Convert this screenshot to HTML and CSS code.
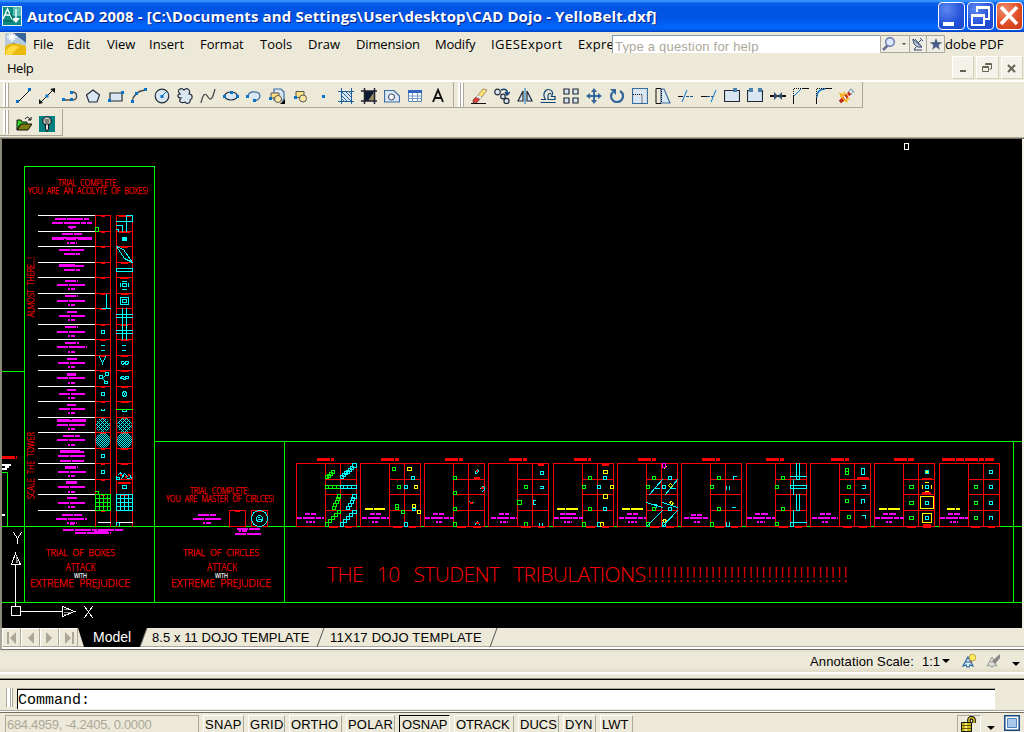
FILE: index.html
```html
<!DOCTYPE html>
<html lang="en">
<head>
<meta charset="utf-8">
<title>AutoCAD 2008</title>
<link rel="stylesheet" href="styles.css">
</head>
<body>
<div class="app">
<header class="titlebar">
  <svg class="app-icon" width="20" height="20" viewBox="0 0 20 20"><path fill="#0b8c84" d="M0 0h20v20H0z"/><path fill="#57bdb5" d="M11 1h8v9h-8z"/><path fill="none" stroke="#e8f4f2" d="M.5.5h19v19H.5z"/><path fill="none" stroke="#fff" stroke-width="1.4" d="M1 13 5.500 3 10 13M3 9h5M14 3v9"/><path fill="#fff" d="M9 12h9l-4 5z"/><path stroke="#053" d="M2 15h8M8 7l3 6"/></svg>
  <span class="title-text">AutoCAD 2008 - [C:\Documents and Settings\User\desktop\CAD Dojo - YelloBelt.dxf]</span>
  <div class="win-buttons">
    <span class="win-btn"><svg width="24" height="24"><path fill="#fff" d="M4 19h11v4H4z"/></svg></span>
    <span class="win-btn"><svg width="24" height="24"><path fill="none" stroke="#fff" stroke-width="2" d="M9 9V5h12v11h-4M4 12h12v10H4z"/><path fill="#fff" d="M8 3h14v3H8zM3 11h14v3H3z"/></svg></span>
    <span class="win-btn close"><svg width="24" height="24"><path stroke="#fff" stroke-width="3.600" d="m4 4 16 17M20 4 4 21"/></svg></span>
  </div>
</header>

<nav class="menubar">
  <div class="menu-row">
    <svg class="doc-icon" width="21" height="22" viewBox="0 0 21 22"><path fill="#274f83" d="M0 0h21v22H0z"/><path fill="#b7c9dd" d="M0 0h8L21 9v5L8 10 0 17z"/><path fill="#35679c" d="M9 0h12v10z"/><path fill="#e9b90c" d="M0 14c4-6 15-3 21-1v9H0z"/><path fill="#ffda43" d="M1 18c3-6 9-6 13-4L6 22H1z"/><path stroke="#fff" stroke-width="1.4" d="M7 0v9M2 4h10M4 1l6 6M10 1 4 7"/></svg>
    <span class="mi m-file">File</span><span class="mi m-edit">Edit</span><span class="mi m-view">View</span><span class="mi m-insert">Insert</span><span class="mi m-format">Format</span><span class="mi m-tools">Tools</span><span class="mi m-draw">Draw</span><span class="mi m-dim">Dimension</span><span class="mi m-modify">Modify</span><span class="mi m-iges">IGESExport</span><span class="mi m-expr">Expre</span><span class="mi m-pdf">dobe PDF</span>
    <div class="search">
      <span class="search-field">Type a question for help</span>
      <span class="search-tools">
        <svg width="65" height="18" viewBox="0 0 65 18"><path fill="none" stroke="#aca899" d="M.5.5h64v17H.5zM29.5 0v18M46.5 0v18"/><path stroke="#6c7297" stroke-width="2.6" d="m8 10-5 5"/><circle cx="10" cy="7" r="4.3" fill="#dce8fb" stroke="#6274aa" stroke-width="1.4"/><path fill="#444" d="M22 8h4l-2 2z"/><path fill="#b8c6dc" stroke="#34496c" d="M33 4c0 6 4 9 9 8zM34 15h8M36 12l-2 3M35 4l7 8M38 8l4-4M40 3l3 3"/><path fill="#48608c" d="m56 3 1.700 4.300h4.500l-3.600 2.900 1.300 4.600-3.900-2.700-3.900 2.700 1.300-4.600L49.800 7.300h4.500z"/></svg>
      </span>
    </div>
  </div>
  <div class="help-row">
    <span class="mi help">Help</span>
    <div class="mdi"><span><svg width="22" height="22"><path fill="#666355" d="M7 13h6v2H7z"/></svg></span><span><svg width="22" height="22"><path fill="none" stroke="#666355" d="M8.500 8V6.500h6V12h-2M5.500 9.500h6v5h-6zM9 7.500h6M6 10.500h6"/></svg></span><span><svg width="22" height="22"><path stroke="#666355" stroke-width="2" d="m6 8 7 7M13 8l-7 7"/></svg></span></div>
  </div>
</nav>

<section class="toolbars">
 <div class="tb-row">
  <div class="toolbar draw"><i class="grip"></i>
   <svg viewBox="0 0 16 16"><path class="k" d="M2 14 14 2"/><path class="b" d="M0 12h3v3H0zM12 0h3v3h-3z"/></svg>
   <svg viewBox="0 0 16 16"><path class="k" d="M1 15 15 1"/><path fill="#111" d="M16 0v5l-5-4zM0 16v-5l4 4z"/><path class="b" d="M6.500 6.500h3v3h-3z"/></svg>
   <svg viewBox="0 0 16 16"><path class="g" d="M1 12h8M10 4c6 0 6 8 1 8"/><path class="b" d="M0 10h3v3H0zM8 10h3v3H8zM8 3h3v3H8z"/></svg>
   <svg viewBox="0 0 16 16"><path class="f" d="m8 2 6.500 5-2.500 7H4L1.500 7z"/></svg>
   <svg viewBox="0 0 16 16"><path class="f" d="M2 5h12v8H2z" stroke-width="1.600"/><path class="b" d="M0 11h3v3H0zM13 3h3v3h-3z"/></svg>
   <svg viewBox="0 0 16 16"><path class="g" d="M1 14C2 8 6 3 14 2"/><path class="b" d="M0 12h3v3H0zM4 4h3v3H4zM13 0h3v3h-3z"/></svg>
   <svg viewBox="0 0 16 16"><circle class="f" cx="8" cy="8" r="6.800"/><path stroke="#07c" d="m8 8 4-4"/><path class="b" d="M6.500 7h3v3h-3z"/></svg>
   <svg viewBox="0 0 16 16"><path class="f" d="M3 6C-1 2 4-1 7 2c3-3 7 0 5 4 4 0 4 5 1 6 1 4-4 4-5 2-4 2-7-1-4-4C0 10 0 6 3 6z"/></svg>
   <svg viewBox="0 0 16 16"><path class="g" d="M1 15C3 6 5 4 8 9s5 0 7-8"/></svg>
   <svg viewBox="0 0 16 16"><ellipse class="f" cx="8" cy="8" rx="6.500" ry="4"/><path class="b" d="M0 7h3v3H0zM13 7h3v3h-3zM7 3h3v3H7z"/></svg>
   <svg viewBox="0 0 16 16"><path class="f" stroke="#557" d="M2 8c1-6 12-5 12 0 0 3-3 5-6 4"/><path class="b" d="M0 7h3v3H0zM7 11h3v3H7z"/></svg>
   <svg viewBox="0 0 16 16"><path class="f" stroke="#58a" d="M5 1h7l3 3v8H5z"/><path fill="#ffe17d" stroke="#555" d="M2 5h8v5H2z"/><circle cx="9" cy="11" r="3.500" fill="#ffe9a0" stroke="#555"/><path fill="#000" d="M16 11v5h-5z"/><path class="b" d="M0 9h3v3H0z"/></svg>
   <svg viewBox="0 0 16 16"><path fill="#ffe17d" stroke="#555" d="M4 3.500h8v6H4z"/><circle cx="11" cy="10.500" r="3.500" fill="#ffe9a0" stroke="#555"/><path class="b" d="M2 8h3v3H2z"/></svg>
   <svg viewBox="0 0 16 16"><path class="b" d="M7 7h3v3H7z"/></svg>
   <svg viewBox="0 0 16 16"><path fill="#dce8f5" d="M2 3h11v10H2z"/><path stroke="#1d5f99" d="M0 3.500h16M0 13.500h16M3.500 0v16M13.500 0v16M3 3l10 10M7 3l6 6M3 7l6 6"/><path stroke="#578" d="m10 3 3 3M3 10l3 3"/></svg>
   <svg viewBox="0 0 16 16"><path fill="#0c1a34" d="M3 3h11v10H3z"/><path fill="#9a9060" d="m7 13 6-9v9z"/><path stroke="#223" stroke-width="1.500" d="M0 3h16M0 13h16M3.500 0v16M13.500 0v16"/></svg>
   <svg viewBox="0 0 16 16"><path class="f" stroke="#1d5f99" d="M.5 2.500H10l5.500 5.500v6H.5z"/><circle cx="7.500" cy="9" r="3" fill="#fff" stroke="#246"/></svg>
   <svg viewBox="0 0 16 16"><path fill="#fff" stroke="#58a" d="M1.500 2.500h13v11h-13z"/><path fill="#2e66bd" d="M1 2h14v3H1z"/><path stroke="#7798ca" d="M1 8h14M1 10.500h14M5.500 5v9M10.500 5v9"/></svg>
   <svg viewBox="0 0 16 16"><path fill="none" stroke="#111" stroke-width="1.900" d="M3 14 8 2l5 12M5 10h6"/></svg>
  </div>
  <div class="toolbar modify"><i class="grip"></i>
   <svg viewBox="0 0 16 16"><path fill="#ffe56c" stroke="#865" stroke-width=".7" d="m7 7 5-6 4 1-6 8z"/><path fill="#d6403a" stroke="#622" stroke-width=".6" d="m2 12 3-3 4 2-3 3.500H2z"/><path fill="#fff" stroke="#888" stroke-width=".5" d="m5 9 2-2 4 2-2 2z"/><path class="k" d="M0 15.500h15"/></svg>
   <svg viewBox="0 0 16 16"><circle class="f" cx="3.500" cy="4" r="2.800"/><circle class="f" cx="9" cy="8.500" r="2.300"/><circle class="f" cx="12.500" cy="13" r="2.600"/><path fill="none" stroke="#147" stroke-width="1.500" d="M7 2c5-2 7 1 6 4m-2-2 2 3 3-3"/></svg>
   <svg viewBox="0 0 16 16"><path class="f" d="M6 3v10H1zM10 3v10h5z"/><path stroke="#0874c8" d="M8 0v16"/></svg>
   <svg viewBox="0 0 16 16"><path fill="none" stroke="#147" stroke-width="1.200" d="M.6 14.500h15M1 11.500h4.500C2 6 5 1.500 8.500 1.500S14 5 11.500 8.500H15v3H8V7.500c0-2.500 3-2.500 3-1"/></svg>
   <svg viewBox="0 0 16 16"><path class="f" stroke-width="1.500" d="M1 1h5v5H1zM10 1h5v5h-5zM1 10h5v5H1zM10 10h5v5h-5z"/></svg>
   <svg viewBox="0 0 16 16"><path fill="#35689c" d="m8 0 3 4H9v3h3V5l4 3-4 3V9H9v3h2l-3 4-3-4h2V9H4v2L0 8l4-3v2h3V4H5z"/></svg>
   <svg viewBox="0 0 16 16"><path fill="none" stroke="#35689c" stroke-width="2.200" d="M4 4C0 8 3 14 8 14s9-7 3-11"/><path fill="#35689c" d="M1 1h6v6z"/></svg>
   <svg viewBox="0 0 16 16"><path class="f" stroke="#48a" d="M.5.5h15v15H.5z"/><path fill="none" stroke="#111" stroke-dasharray="1 1" d="M1 6.500h9V16"/></svg>
   <svg viewBox="0 0 16 16"><path class="f" stroke="#48a" d="M6 1h3l6 14H6z"/><path class="k" d="M6 .5H1v15h5"/><path stroke="#111" stroke-dasharray="1 1" d="M6.500 1v14"/></svg>
   <svg viewBox="0 0 16 16"><path class="k" d="M0 8.500h5"/><path stroke="#0874c8" d="m4 14 5-12"/><path stroke="#158" stroke-dasharray="3 1" d="M8 8.500h8"/></svg>
   <svg viewBox="0 0 16 16"><path class="k" d="M0 8.500h6"/><path stroke="#0874c8" d="m10 14 5-12"/><path stroke="#158" stroke-dasharray="3 1" d="M6 8.500h6"/></svg>
   <svg viewBox="0 0 16 16"><path class="f" d="M.5 2.500h15v11H.5z"/><path class="b2" d="M9 0h4v4H9z"/></svg>
   <svg viewBox="0 0 16 16"><path class="f" d="M4 2.500H.5v11h15v-11H13"/><path class="b2" d="M2 0h4v4H2zM11 0h4v4h-4z"/></svg>
   <svg viewBox="0 0 16 16"><path stroke="#111" stroke-width="2" d="M0 8h16"/><path fill="#35506b" d="m4 4 4 4-4 4zM12 4 8 8l4 4z"/></svg>
   <svg viewBox="0 0 16 16"><path class="k" d="M.5 16V8M9 .5h7"/><path stroke="#0874c8" d="m1 8 7-7"/><path fill="none" stroke="#111" stroke-dasharray="1 1" d="M.5 8V.5H10"/></svg>
   <svg viewBox="0 0 16 16"><path class="k" d="M.5 16V9M9 .5h7"/><path fill="none" stroke="#0874c8" stroke-width="1.500" d="M1 9c0-5 3-8 8-8"/><path fill="none" stroke="#111" stroke-dasharray="1 1" d="M.5 8V.5H10"/></svg>
   <svg viewBox="0 0 16 16"><path fill="#f6b32b" d="m0 4 4 2 1-3 2 3 3-1-1 4 2 2-3 1 1 3-4-2-4 2 1-4z"/><path stroke="#c32018" stroke-width="3.500" stroke-dasharray="4 1.500" d="m1 14 10-9"/><path stroke="#fff" stroke-width="1.500" d="m5 8 2 3"/><path fill="none" stroke="#58b" stroke-dasharray="2 1" d="M10 4c0-4 4-3 4-1s-2 2-2 4M11 1l5 4"/></svg>
  </div>
 </div>
 <div class="tb-row second">
  <div class="toolbar express"><i class="grip"></i>
   <svg viewBox="0 0 16 16"><path fill="#35d51f" stroke="#111" d="M1 14V4h4l1 2h5v3H4z"/><path fill="#7d7b10" stroke="#111" d="m1 14 4-6h11l-4 6z"/><path fill="none" stroke="#111" d="M9 3c2-3 4-2 5 1m1-3v3h-3"/></svg>
   <svg viewBox="0 0 16 16"><path fill="#008080" d="M0 0h16v16H0z"/><circle cx="8" cy="5" r="4.200" fill="#ccc" stroke="#111"/><path stroke="#333" d="M5.500 4h5M6 6h4"/><path fill="#ddd" stroke="#111" d="M6.500 8h3v5L8 15.500 6.500 13z"/></svg>
  </div>
 </div>
</section>

<main class="canvas">
<svg width="1020" height="489" viewBox="2 139 1020 489">
 <defs>
  <path id="frame" d="M0 0H60V63H0ZM29 0V63M44 0V63M29 16H60M29 31H60M29 47H60"/>
  <pattern id="mesh" width="4" height="4" patternUnits="userSpaceOnUse"><path fill="#0ff" d="M0 0h1v1H0zM1 1h1v1H1zM2 2h1v1H2zM3 1h1v1H3zM1 3h1v1H1zM3 3h1v1H3z"/></pattern>
  <pattern id="mesh2" width="2" height="2" patternUnits="userSpaceOnUse"><path fill="#0ff" d="M0 0h1v1H0zM1 1h1v1H1z"/></pattern>
 </defs>
 <g class="lines" transform="translate(.5 .5)">
  <!-- layout borders -->
  <path class="green" d="M24 602V166H154V602M2 371H24M2 472H7V526M2 526H1022M2 602H1022M154 441H1022M284 441V602M1013 441V602"/>
  <!-- tower -->
  <path class="white" d="M38 215H95M38 231H95M38 246H95M38 262H95M38 277H95M38 293H95M38 308H95M38 324H95M38 339H95M38 355H95M38 370H95M38 386H95M38 401H95M38 417H95M38 432H95M38 448H95M38 463H95M38 479H95M38 494H95M38 510H95"/>
  <path class="red" d="M95 215V526M110 215V526M116 215V526M132 215V526M95 215H110M95 231H110M95 246H110M95 262H110M95 277H110M95 293H110M95 308H110M95 324H110M95 339H110M95 355H110M95 370H110M95 386H110M95 401H110M95 417H110M95 432H110M95 448H110M95 463H110M95 479H110M95 494H110M95 510H110M116 215H132M116 231H132M116 246H132M116 262H132M116 277H132M116 293H132M116 308H132M116 324H132M116 339H132M116 355H132M116 370H132M116 386H132M116 401H132M116 417H132M116 432H132M116 448H132M116 463H132M116 479H132M116 494H132"/>
  <path class="red" d="M101 216h3M101 232h3M101 247h3M101 263h3M101 278h3M101 294h3M100 309h5M101 325h3M100 340h5M101 356h3M100 371h5M101 387h3M101 402h3M101 418h3M100 433h5M101 449h3M101 464h3M101 480h3M101 495h3M101 511h3M119 216h11M119 232h10M121 247h6M121 263h6M120 278h8M121 294h7M121 325h6M121 340h7M121 356h6M121 371h7M121 387h6M121 402h7M121 418h6M121 433h6M121 449h6M121 464h6M118 482h12M118 483h12M121 495h6"/>
  <path class="cyan" d="M126 215H132V221H126ZM126 221V231M116 221H126M116 225H122V231M116 229h2v2M122 237h4v3h-4zM123 238h3M123 239h3M116 246L123 249L132 262L124 258L116 246M116 268H132V271H116ZM122 281h4M122 289h4M120 283v3M128 283v3M122 283h4v3h-4zM120 297h8v7h-8zM122 299h4v3h-4zM106 294V308M102 308H110M122 308V339M126 308V339M116 314H132M116 317H132M116 330H132M116 333H132M101 330h3v3h-3zM101 345h3M101 350h3M122 345h3M122 350h3M99 356l3 7l3-7M121 361h2l1 1l2-1h2v2l-2 1l-2-1l-2 1l-1-1zM105 372h3v3h-3zM99 375h3v3h-3zM104 381h3v2h-3zM102 378l3-3M102 378l3 3M121 376h2l1 1l2-1h2v2h-2l-2 1l-2-1h-2zM101 392h3v3h-3zM122 392l2-1l2 1v3l-2 1l-2-1zM124 393v1M101 409v1h3v-1M122 409v2h4v-2M101 454h3v3h-3zM101 470h3v3h-3zM116 477h3v2h-3v-3M118 474l2-2l2 4l2-3l3 3l2-2l2 4M121 478l2-2M127 478h2M122 485h4v3h-4zM116 525v-3h3v3"/>
  <path class="green" d="M95 227h3v4h-3zM116 409h16M95 491h3v3M95 494H110V510H95ZM99 494v16M103 494v16M107 494v16M95 498h15M95 502h15M95 506h15"/>
  <path class="cyan" d="M116 494H132V510H116ZM120 494v16M124 494v16M128 494v16M116 498h16M116 502h16M116 506h16"/>
  <path class="white" d="M98 522h12M119 522h13"/>
  <!-- circle trial -->
  <path class="red" d="M229 510H245V526H229ZM251 510H267V526H251ZM235 511h4M257 511h4"/>
  <g class="cyan"><circle cx="259" cy="518" r="8"/><circle cx="259" cy="518" r="3"/><path d="M258 517h1M260 519h1M258 519h3"/></g>
  <!-- tribulation frames -->
  <g class="red"><use href="#frame" x="296" y="463"/><use href="#frame" x="360" y="463"/><use href="#frame" x="424" y="463"/><use href="#frame" x="488" y="463"/><use href="#frame" x="553" y="463"/><use href="#frame" x="617" y="463"/><use href="#frame" x="681" y="463"/><use href="#frame" x="746" y="463"/><use href="#frame" x="810" y="463"/><use href="#frame" x="874" y="463"/><use href="#frame" x="939" y="463"/></g>
  <path class="green" d="M325 475h3v3h-3zM327 474h3v3h-3zM329 472h3v3h-3zM331 470h3v3h-3zM325 485h31v3h-31zM328 485v3M332 485v3M336 485v3M332 506h3v3h-3zM333 503h3v3h-3zM335 500h3v3h-3zM336 497h3v3h-3zM337 494h3v4h-3zM325 522h3v4h-3zM328 519h3v3h-3zM331 516h3v3h-3zM334 513h3v3h-3zM337 510h3v3h-3z"/>
  <path class="cyan" d="M340 475h3v3h-3zM342 473h3v3h-3zM344 471h3v3h-3zM346 470h3v3h-3zM348 468h3v3h-3zM350 466h3v3h-3zM352 463h4v4h-4zM340 485h16v3h-16zM343 485v3M347 485v3M351 485v3M346 506h3v3h-3zM348 503h3v3h-3zM350 500h3v3h-3zM351 497h3v3h-3zM352 494h4v4h-4zM340 522h3v4h-3zM343 519h3v3h-3zM346 516h3v3h-3zM349 513h3v3h-3zM352 510h4v3h-4z"/>
  <path class="green" d="M392 467h3v3h-3zM397 485h3v3h-3zM395 504h3v5h-3zM395 507h3M401 510h3v3h-3zM453 476h3v3h-3zM453 491h3v3h-3zM453 507h3v3h-3zM453 522h3v4h-3zM524 485h3v3h-3zM517 500h4v4h-4zM524 522h3v4h-3zM588 476h3v3h-3zM582 485h3v3h-3zM588 507h3v3h-3zM582 522h3v4h-3zM652 476h3v3h-3zM646 485h3v3h-3zM652 507h3v3h-3zM646 522h3v4h-3zM717 476h3v3h-3zM710 485h3v3h-3zM717 507h3v3h-3zM710 522h3v4h-3zM781 476h3v3h-3zM775 485h3v3h-3zM781 507h3v3h-3zM775 522h3v3h-3zM845 468h3v6h-3zM845 471h3M847 485h3v3h-3zM845 499h3v3h-3zM847 515h3v3h-3zM909 485h4v3h-4zM909 501h4v3h-4zM909 516h4v3h-4zM974 485h3v3h-3zM974 501h3v3h-3zM974 516h3v3h-3z"/>
  <path class="cyan" d="M411 476h3v3h-3zM404 485h3v3h-3zM412 508h3v2h-3zM404 522h3v4h-3zM475 473v-2l2-2l1 2l-2 2M480 488l2-2l2 1v2l-2 2M469 501l2 2l2-1M475 524l1-2l1-1l1 2l1 1M540 471h3v3h-3zM540 486h3v2h-3M535 500h-2v4h2M539 525v-2M542 525v-2M603 476h3v3h-3zM597 485h3v3h-3zM603 507h3v3h-3zM597 522h3v4h-3zM668 476h3v3h-3zM662 485h3v3h-3zM668 507h3v3h-3zM662 522h3v4h-3zM649 494L662 479M665 494L677 479M646 502L662 507M662 502L677 507M646 526L662 510M662 526L677 510M654 488h5M670 488h5M652 504h4v3M733 479v-3h3M726 486v3M729 486v3M732 507h3M726 522v4h3v-4M796 463v16h3v-16M790 476h16M793 479v15M790 485h16v3h-16zM796 494v16h3v-16M793 510v16M790 522h16M790 522v4h3M861 468h3v6h-3zM862 485h3v3h-3M861 503v-4h3v3M862 515h3v3M925 470h3v3h-3zM925 485h3v3h-3zM925 501h3v3h-3zM925 516h3v3h-3zM991 470h-2v3h2M992 470v3M989 485h3v3h-3zM989 501h3v3h-3v-2M989 519v-3h3v3"/>
  <path class="yellow" d="M407 467h4v3h-4zM414 485h3v3h-3zM412 504h3v3h-3zM417 510h3v3h-3zM603 470h4v3h-4zM610 485h3v3h-3zM603 494h4v4h-4zM600 522h3v4h-3zM668 485l2-2l2 2l-2 2zM669 502l2-1l2 2l-2 1zM662 520l2-1l2 1l-2 2zM664 467v1M666 466v0M926 471h1v1h-1zM925 482h3M925 491h3M922 485v3M931 485v3M920 496h13v12h-13zM922 513h9v9h-9z"/>
  <path class="magenta" d="M662 463h3v4h-3z"/>
  <!-- UCS icon -->
  <path class="white" d="M11 606h9v9h-9zM15 606V564M11 564h9l-5-11zM20 611H62M62 606v10l12-5zM13 532l4 6l4-6M17 538v5M84 606l8 11M92 606l-8 11M904 143h4v6h-4z"/>
  <path stroke="#888" d="M16 556v6M17 560v2M64 609h3M64 612h6M64 614h2"/>
 </g>
 <circle cx="102.800" cy="425" r="7.200" fill="url(#mesh)"/><circle cx="124.500" cy="425" r="7.500" fill="url(#mesh)"/>
 <circle cx="102.800" cy="440.500" r="7.500" fill="url(#mesh2)"/><circle cx="124.500" cy="440.500" r="7.800" fill="url(#mesh2)"/>
 <!-- notes too small to resolve at this zoom level -->
 <g class="notes">
  <path class="magenta" stroke-dasharray="11 .6 5 .7" d="M55 219H89M52 223H92M62 234H82M52 238H92M59 250H84M64 254H80M59 266H84M64 270H80M65 281H78M57 285H86M65 296H78M57 301H86M67 312H77M59 316H85M65 327H78M57 332H86M65 343H79M57 347H87M67 359H77M58 363H85M67 374H76M57 378H86M67 390H76M59 394H85M67 405H76M59 409H85M57 421H86M57 425H86M63 436H80M57 440H86M60 452H84M58 456H85M60 461H84M65 467H78M58 472H86M66 482H77M58 487H85M67 498H77M58 503H85M62 515H82M56 519H87M63 530H123M75 533H111M198 515H216M193 519H221M237 529H260M235 534H261"/>
  <path class="magenta" stroke-dasharray="2 .7 3 .7" d="M68 227H76M67 243H77M68 289H75M68 305H75M68 320H75M68 336H75M68 352H75M68 367H75M68 383H75M68 398H75M68 413H75M68 429H75M68 445H75M68 476H75M68 492H75M68 507H75M67 523H77M203 523H211M239 531H248"/>
  <path class="magenta thin" d="M70 227.500h3M70 523.500h4M52 238.500h12M66 238.500h10M78 238.500h14M72 420.500h14M57 420.500h13M59 265.500h16M67 374.500h9M65 467.500h11M66 482.500h11M60 451.500h20M94 532.500h14"/>
  <path class="magenta" stroke-dasharray="5 1 12 .7" d="M305 514H316M297 518H324M370 514H381M362 518H389M433 514H444M425 518H454M499 514H509M491 518H517M560 514H576M554 518H583M627 514H638M619 518H646M691 515H702M684 518H709M755 514H768M747 518H775M820 514H831M812 518H838M883 514H896M875 518H904M948 514H960M940 518H968"/>
  <path class="magenta" stroke-dasharray="2 1 3 1" d="M306 522h9M372 522h7M436 522h7M500 522h8M564 522h8M628 522h9M694 522h7M757 522h8M822 522h7M886 522h7M950 522h8"/>
  <path class="yellow" stroke-dasharray="8 .6 4 .6" d="M365 509H385M557 509H578M622 509H643M879 509H900M947 509H960"/>
  <path class="red fat" stroke-dasharray="8 .4 5 .8" d="M317 459.500H334M381 459.500H399M445 459.500H463M509 459.500H527M574 459.500H591M638 459.500H656M702 459.500H720M766 459.500H784M831 459.500H849M894 459.500H914M942 459.500H994M2 457.500H17"/>
  <path class="red" d="M329 527h9M345 527h7M393 527h9M409 527h7M457 527h9M473 527h8M521 527h10M538 527h7M586 527h9M602 527h7M650 527h9M666 527h8M715 527h9M731 527h7M779 527h9M795 527h7M843 527h9M859 527h8M907 527h9M923 527h8M971 527h9M988 527h7M474 478h6M538 465h6M602 465h7M857 478h12M922 479h10M922 493h9M923 525h8M476 471h2M481 488h3M470 503h3M476 523h3M120 475h2M125 477h2M128 475h2"/>
  <path class="white" d="M2 464.500h9M5 467h4M2 469h5M2 515h3"/>
 </g>
 <g class="cad">
  <text x="58" y="186" textLength="60" lengthAdjust="spacingAndGlyphs">TRIAL COMPLETE:</text>
  <text x="28" y="194" textLength="120" lengthAdjust="spacingAndGlyphs">YOU ARE AN ACOLYTE OF BOXES!</text>
  <text transform="translate(33.500 317) rotate(-90)" textLength="60" lengthAdjust="spacingAndGlyphs">ALMOST THERE...!</text>
  <text transform="translate(33.500 499) rotate(-90)" textLength="67" lengthAdjust="spacingAndGlyphs">SCALE THE TOWER</text>
  <text x="190" y="494" textLength="59" lengthAdjust="spacingAndGlyphs">TRIAL COMPLETE:</text>
  <text x="166" y="501.500" textLength="108" lengthAdjust="spacingAndGlyphs">YOU ARE MASTER OF CIRLCES!</text>
  <text x="46" y="556" textLength="69" lengthAdjust="spacingAndGlyphs">TRIAL OF BOXES</text>
  <text x="183" y="556" textLength="76" lengthAdjust="spacingAndGlyphs">TRIAL OF CIRCLES</text>
  <g class="cad-mid">
   <text x="65.500" y="571" textLength="30" lengthAdjust="spacingAndGlyphs">ATTACK</text>
   <text x="207" y="571" textLength="30" lengthAdjust="spacingAndGlyphs">ATTACK</text>
   <text x="30" y="587" textLength="100" lengthAdjust="spacingAndGlyphs">EXTREME PREJUDICE</text>
   <text x="171" y="587" textLength="100" lengthAdjust="spacingAndGlyphs">EXTREME PREJUDICE</text>
  </g>
  <text class="with" x="74" y="578" textLength="13" lengthAdjust="spacingAndGlyphs">WITH</text>
  <text class="with" x="215" y="578" textLength="13" lengthAdjust="spacingAndGlyphs">WITH</text>
  <text class="cad-big" x="327" y="582" textLength="319" lengthAdjust="spacing">THE 10 STUDENT TRIBULATIONS</text>
  <text class="cad-big" x="647" y="582" textLength="201" lengthAdjust="spacing">!!!!!!!!!!!!!!!!!!!!!!!!!!!!!!!!</text>
 </g>
</svg>
</main>

<div class="tabs">
 <span class="nav"><svg width="19" height="18"><path d="M8 9l6-6v12zM5 3h2v12H5z"/></svg></span><span class="nav"><svg width="19" height="18"><path d="M7 9l6-6v12z"/></svg></span><span class="nav"><svg width="19" height="18"><path d="M12 9 6 3v12z"/></svg></span><span class="nav"><svg width="19" height="18"><path d="M12 9 6 3v12zM13 3h2v12h-2z"/></svg></span>
 <span class="tab model">Model</span><svg class="slant" width="9" height="19"><path fill="#000" d="M0 0h8L1 19H0z"/><path fill="none" stroke="#716f64" d="M8 0 1 19"/></svg><span class="tab t1">8.5 x 11 DOJO TEMPLATE</span><svg class="slant" width="9" height="19"><path stroke="#555" d="M8 0 1 19"/></svg><span class="tab t2">11X17 DOJO TEMPLATE</span><svg class="slant" width="9" height="19"><path stroke="#555" d="M8 0 1 19"/></svg>
</div>
<div class="annotation">
 <span class="ann-label">Annotation Scale:</span><span class="ann-val">1:1</span><svg width="8" height="5"><path d="M0 0h8L4 4z"/></svg>
 <svg class="ann-a" width="16" height="16"><path fill="#d8e8fb" stroke="#27639b" stroke-width="1.200" d="m1 13 5-9 5 9-3-1-1 2H5l-1-2zM4 9h5"/><circle cx="10.500" cy="4.500" r="3.300" fill="#ffec61" stroke="#bda343"/><path stroke="#777" stroke-width="2" d="m8 8 2 2"/></svg>
 <svg class="ann-b" width="16" height="16"><path fill="#e2e2dd" stroke="#999" d="m1 13 5-9 5 9-3-1-1 2H5l-1-2zM4 9h5"/><path fill="#888" d="m6 8 8-7v4L9 11z"/></svg>
 <svg class="ann-more" width="8" height="5"><path d="M0 0h8L4 4z"/></svg>
</div>
<div class="command"><i class="grip"></i><div class="cmd-line">Command:</div></div>
<footer class="status">
 <span class="coords">684.4959, -4.2405, 0.0000</span>
 <span class="cell s1">SNAP</span><span class="cell s2">GRID</span><span class="cell s3">ORTHO</span><span class="cell s4">POLAR</span><span class="cell s5 on">OSNAP</span><span class="cell s6">OTRACK</span><span class="cell s7">DUCS</span><span class="cell s8">DYN</span><span class="cell s9">LWT</span>
 <div class="tray">
  <span class="lock"><svg width="22" height="17"><path fill="none" stroke="#111" stroke-width="3.600" d="M11 8V4c0-3 5-3 5 0v3"/><path fill="none" stroke="#d8bd18" stroke-width="1.600" d="M11 8V4c0-3 5-3 5 0v3"/><path fill="#cfb814" stroke="#111" d="M3.500 6.500h10v9h-10z"/><path fill="#fff48a" d="M7 7h2v8H7z"/><path stroke="#65590a" d="M4 9.500h9M4 12.500h9"/></svg></span>
  <svg class="more" width="8" height="5"><path d="M0 0h8L4 4z"/></svg>
  <svg class="clean" width="16" height="16"><path fill="#fff" stroke="#124a82" stroke-width="1.500" d="M.8.8h14.400v14.400H.8z"/><path fill="#a9c9ec" stroke="#4d80b4" d="M3.500 3.500h9v9h-9z"/></svg>
 </div>
</footer>
</div>
</body>
</html>
```

FILE: styles.css
```css
* { box-sizing: border-box; }
body { margin: 0; background: #ece9d8; }
.app {
  width: 1024px; height: 732px; overflow: hidden;
  display: flex; flex-direction: column;
  background: #ece9d8; color: #000;
  font: 14px "Liberation Sans", Arial, sans-serif;
  white-space: nowrap;
}
svg { display: block; flex: none; }

.titlebar {
  height: 32px; flex: none; display: flex; align-items: center; padding: 0 2px 0 2px;
  background: linear-gradient(#2a8cf8 0, #3b98ff 1px, #0a60ee 3px, #0054e3 8px, #0055e5 18px, #0066fd 26px, #0062f5 29px, #0040c8 32px);
}
.title-text {
  margin-left: 5px; width: 640px; color: #fff;
  font: bold 15px/32px "Open Sans", "Noto Sans", sans-serif;
  letter-spacing: .12px;
  text-shadow: 1px 1px 0 #0a1f84;
}
.win-buttons { display: flex; gap: 3px; margin-left: auto; margin-right: -1px; margin-top: -1px; }
.win-btn {
  width: 27px; height: 28px; border: 1px solid #fff; border-radius: 4px;
  background: radial-gradient(circle at 30% 25%, #5e88f0, #2250d8 60%, #1c48cc);
}
.win-btn + .win-btn { margin-left: -1px; }
.win-btn.close { background: radial-gradient(circle at 30% 25%, #f08a6a, #de4a22 60%, #c83a12); }

.menubar { height: 50px; flex: none; border-bottom: 2px solid #fff; font: 13px "Open Sans", "Noto Sans", sans-serif; }
.menu-row { height: 24px; display: flex; align-items: center; padding-left: 5px; position: relative; }
.doc-icon { margin-right: 7px; }
.mi { line-height: 24px; flex: none; }
.m-file { width: 34px; } .m-edit { width: 40px; } .m-view { width: 42px; }
.m-insert { width: 51px; } .m-format { width: 60px; } .m-tools { width: 48px; }
.m-draw { width: 48px; } .m-dim { width: 79px; letter-spacing: -.15px; } .m-modify { width: 56px; letter-spacing: -.2px; }
.m-iges { width: 87px; letter-spacing: .45px; } .m-expr { width: 367px; letter-spacing: .3px; }
.help { letter-spacing: -.5px; }
.search { position: absolute; left: 612px; top: 3px; height: 18px; display: flex; }
.search-field {
  width: 268px; height: 18px; overflow: hidden; background: #fff; color: #aca899;
  border: 1px solid #7f9db9; border-width: 1px 0 0 1px; padding-left: 2px;
  font: 13px/21px "Liberation Sans", Arial, sans-serif; letter-spacing: .2px;
}
.search-tools { background: #f0eee4; }
.help-row { height: 24px; display: flex; justify-content: space-between; padding: 0 1px 0 7px; }
.mdi { display: flex; gap: 2px; }
.mdi span { width: 22.500px; height: 23px; background: #f3f1e8; border: 1px solid #fff; border-right-color: #d5d0bd; border-bottom-color: #d5d0bd; }

.toolbars { height: 57px; flex: none; border-bottom: 1px solid #716f64; box-shadow: inset 0 -1px #aca899; }
.tb-row { display: flex; height: 26px; }
.toolbar { display: flex; align-items: center; border: 1px solid #aca899; border-width: 0 1px 1px 0; height: 26px; padding-left: 3px; }
.toolbar svg { width: 16px; height: 16px; margin: 2px 3px 0 4px; }
.grip { width: 3px; height: 24px; margin-right: 1px; border: 1px solid #aca899; border-width: 0 1px 0 1px; background: #fff; }
.toolbar .grip { width: 6px; margin-right: 3px; background: linear-gradient(90deg, #fff 0 2px, #aca899 2px 3px, #fff 3px); border-left: 0; }
.draw { width: 454px; }
.modify { width: 409px; padding-left: 4px; }
.modify .grip { margin-right: 3px; }
.express { width: 63px; height: 27px; padding-left: 3px; }
.express svg { margin-top: 4px; }
.second { padding-top: 1px; height: 28px; }
.k { fill: none; stroke: #111; }
.g { fill: none; stroke: #4a4a4a; stroke-width: 1.300; }
.b { fill: #0874c8; }
.b2 { fill: #4b7fae; }
.f { fill: #dbe6f3; stroke: #222b38; stroke-width: 1.200; }
.f[stroke] { stroke: #3b6e9e; }

.canvas { height: 489px; flex: none; background: #000; border-left: 2px solid #8d8a7c; border-right: 2px solid #f4f2e8; }
.lines, .notes { fill: none; shape-rendering: crispEdges; }
.lines { stroke-linecap: square; }
.notes { stroke-width: 2; }
.thin { stroke-width: 3; }
.fat { stroke-width: 3; }
.green { stroke: #0f0; } .red { stroke: #f00; } .cyan { stroke: #0ff; }
.magenta { stroke: #f0f; } .yellow { stroke: #ff0; } .white { stroke: #fff; }
.cad { fill: #f00; stroke: #f00; stroke-width: .25px; font: 300 8.400px "Open Sans", "Lato", sans-serif; word-spacing: 2.500px; }
.cad-mid { font-size: 10.500px; }
.with { fill: #fff; stroke: #fff; font-size: 7px; }
.cad-big { font: 300 21px "Open Sans", "Lato", sans-serif; word-spacing: 9px; stroke: none; }

.tabs { height: 22px; flex: none; display: flex; padding-left: 2px; border-left: 2px solid #aca899; border-bottom: 1px solid #716f64; box-shadow: inset 0 -2px #fff, inset 0 -3px #aca899; }
.nav { width: 19px; height: 19px; border: 1px solid #fff; border-right-color: #aca899; border-bottom-color: #aca899; margin-left: 0; }
.nav svg { fill: #aca899; margin-left: -1px; }
.tabs .nav:first-child { margin-left: -2px; }
.tab { line-height: 19px; height: 19px; overflow: visible; }
.model { width: 61px; padding-left: 15px; background: #000; color: #fff; clip-path: polygon(0 0, 100% 0, 100% 100%, 6px 100%); }
.t1 { width: 168px; padding-left: 4px; font-size: 13px; letter-spacing: .06px; }
.t2 { width: 164px; padding-left: 5px; font-size: 13px; letter-spacing: .24px; }

.annotation { height: 22px; flex: none; display: flex; align-items: center; padding-left: 810px; background: linear-gradient(#e0dcc8, #ece9d8 3px, #ece9d8 17px, #dedac4); font: 13px "Liberation Sans", Arial, sans-serif; }
.ann-label { width: 112px; letter-spacing: .12px; }
.ann-val { width: 20px; }
.ann-a { margin-left: 12px; }
.ann-b { margin-left: 8px; }
.ann-more { margin: 6px 0 0 10px; }
.command { height: 39px; flex: none; margin-top: 0; padding: 17px 29px 2px 6px; display: flex; background: linear-gradient(#fff 0 2px, #ece9d8 2px 6px, #8d8a7c 6px 7px, #000 7px 8px, #ece9d8 8px); border-bottom: 1px solid #aca899; }
.command .grip { width: 7px; height: 19px; margin: -1px 4px 0 0; background: linear-gradient(90deg, #fff 0 3px, #aca899 3px 4px, #fff 4px); }
.cmd-line { flex: 1; height: 20px; background: #fff; border-top: 1px solid #000; border-left: 1px solid #000; box-shadow: 0 -1px #aca899; font: 15px/22px "Liberation Mono", "Courier New", monospace; }
.status { height: 21px; flex: none; display: flex; padding: 3px 4px 0 5px; border-top: 1px solid #fff; box-shadow: inset 0 1px #716f64; }
.coords { width: 194px; margin-right: 4px; height: 18px; padding-left: 1px; border: 1px solid #aca899; border-bottom: 0; color: #aca899; line-height: 17px; font-size: 13px; letter-spacing: -.32px; }
.cell { height: 18px; margin-right: 4px; border: 1px solid #fff; border-right-color: #aca899; border-bottom: 0; padding-left: 1px; line-height: 17px; font-size: 13px; }
.cell.on { border: 1px solid #000; border-right-color: #fff; border-bottom: 0; padding-top: 1px; padding-left: 2px; line-height: 16px; }
.s1 { width: 41px; letter-spacing: .3px; } .s2 { width: 37px; letter-spacing: .3px; } .s3 { width: 53px; letter-spacing: .1px; } .s4 { width: 49px; letter-spacing: .2px; } .s5 { width: 51px; }
.s6 { width: 60px; letter-spacing: -.1px; } .s7 { width: 41px; } .s8 { width: 33px; } .s9 { width: 33px; }
.tray { margin-left: auto; display: flex; }
.lock { border: 1px solid #aca899; border-right-color: #fff; border-bottom: 0; width: 24px; height: 18px; }
.more { margin: 11px 9px 0 6px; }
.clean { margin-right: 0; }
```
